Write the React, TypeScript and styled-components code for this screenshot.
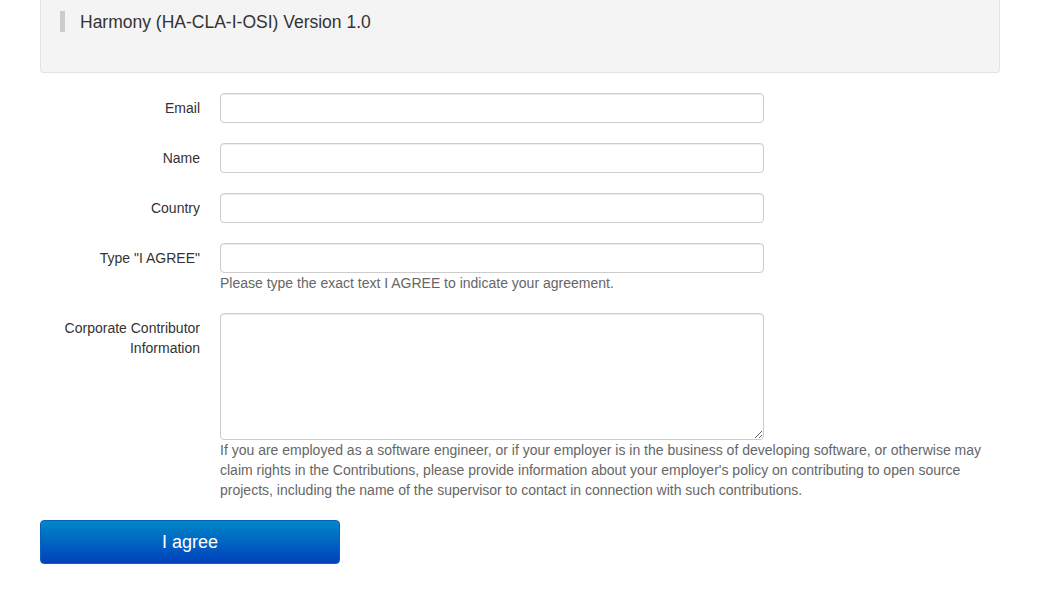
import styled, { createGlobalStyle } from "styled-components";

const GlobalStyle = createGlobalStyle`
  html, body {
    margin: 0;
    padding: 0;
    background: #fff;
  }
  body {
    font-family: "Liberation Sans", Arial, Helvetica, sans-serif;
    font-size: 14px;
    line-height: 20px;
    color: #333;
  }
  * {
    box-sizing: border-box;
  }
`;

const fields = [
  { id: "email", label: "Email" },
  { id: "name", label: "Name" },
  { id: "country", label: "Country" },
];

const App = () => {
  return (
    <StyledPage>
      <GlobalStyle />
      <StyledWell>
        <StyledQuote>Harmony (HA-CLA-I-OSI) Version 1.0</StyledQuote>
      </StyledWell>
      <StyledForm>
        {fields.map((f) => (
          <StyledGroup key={f.id}>
            <StyledLabel htmlFor={f.id}>{f.label}</StyledLabel>
            <StyledField>
              <StyledInput id={f.id} type="text" />
            </StyledField>
          </StyledGroup>
        ))}
        <StyledGroup>
          <StyledLabel htmlFor="agree">Type "I AGREE"</StyledLabel>
          <StyledField>
            <StyledInput id="agree" type="text" />
            <StyledHelp>
              Please type the exact text I AGREE to indicate your agreement.
            </StyledHelp>
          </StyledField>
        </StyledGroup>
        <StyledGroup>
          <StyledLabel htmlFor="corporate">
            Corporate Contributor
            <br />
            Information
          </StyledLabel>
          <StyledField>
            <StyledTextarea id="corporate" />
            <StyledHelp>
              If you are employed as a software engineer, or if your employer is
              in the business of developing software, or otherwise may claim
              rights in the Contributions, please provide information about your
              employer's policy on contributing to open source projects,
              including the name of the supervisor to contact in connection with
              such contributions.
            </StyledHelp>
          </StyledField>
        </StyledGroup>
        <StyledButton type="button">I agree</StyledButton>
      </StyledForm>
    </StyledPage>
  );
};

export default App;

const StyledPage = styled.div`
  width: 960px;
  margin-left: 40px;
  padding-bottom: 40px;
`;

const StyledWell = styled.div`
  background: #f4f4f4;
  border: 1px solid #e3e3e3;
  border-top: none;
  border-radius: 0 0 4px 4px;
  padding: 11px 19px 40px 19px;
`;

const StyledQuote = styled.blockquote`
  margin: 0;
  padding: 1px 0 0 15px;
  border-left: 5px solid #cccccc;
  font-size: 17.5px;
  line-height: 20px;
  color: #333;
`;

const StyledForm = styled.form`
  margin-top: 20px;
  display: flex;
  flex-direction: column;
`;

const StyledGroup = styled.div`
  display: grid;
  grid-template-columns: 160px 1fr;
  column-gap: 20px;
  margin-bottom: 20px;
`;

const StyledLabel = styled.label`
  text-align: right;
  padding-top: 5px;
  font-size: 14px;
  line-height: 20px;
  color: #333;
`;

const StyledField = styled.div`
  display: flex;
  flex-direction: column;
`;

const StyledInput = styled.input`
  width: 544px;
  height: 30px;
  padding: 4px 10px;
  font-family: inherit;
  font-size: 14px;
  color: #555;
  background: #fff;
  border: 1px solid #cccccc;
  border-radius: 4px;
  box-shadow: inset 0 1px 1px rgba(0, 0, 0, 0.075);
  outline: none;
`;

const StyledTextarea = styled.textarea`
  width: 544px;
  height: 127px;
  padding: 6px 10px;
  font-family: inherit;
  font-size: 14px;
  color: #555;
  background: #fff;
  border: 1px solid #cccccc;
  border-radius: 4px;
  box-shadow: inset 0 1px 1px rgba(0, 0, 0, 0.075);
  outline: none;
  display: block;
`;

const StyledHelp = styled.span`
  display: block;
  margin-top: 0;
  color: #666;
  font-size: 14px;
  line-height: 20px;
`;

const StyledButton = styled.button`
  width: 300px;
  height: 44px;
  margin-top: 0;
  border: 1px solid #0a5fb8;
  border-radius: 4px;
  background: linear-gradient(to bottom, #0088c9 0%, #0041bc 100%);
  color: #fff;
  font-family: inherit;
  font-size: 18px;
  cursor: pointer;
`;
